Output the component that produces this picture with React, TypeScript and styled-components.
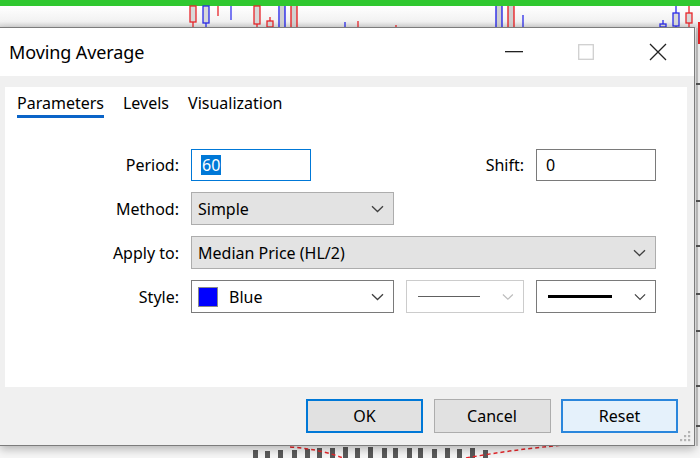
import React from "react";
import styled, { createGlobalStyle, css } from "styled-components";

const GlobalStyle = createGlobalStyle`
  html, body {
    margin: 0;
    padding: 0;
    width: 700px;
    height: 458px;
    overflow: hidden;
    background: #f4f4f4;
  }
  body {
    font-family: "Noto Sans", "Open Sans", Arial, sans-serif;
    color: #000;
  }
`;

const Desktop = styled.div`
  position: relative;
  width: 700px;
  height: 458px;
  overflow: hidden;
`;

const Backdrop = styled.svg`
  position: absolute;
  inset: 0;
`;

const Window = styled.div`
  position: absolute;
  left: 0;
  top: 27px;
  width: 695px;
  display: flex;
  flex-direction: column;
  box-sizing: border-box;
  border: 1px solid #7c7c7c;
  border-left: none;
  background: #f0f0f0;
  box-shadow: 0 3px 9px rgba(0, 0, 0, 0.28);
`;

const TitleBar = styled.div`
  height: 48px;
  display: flex;
  align-items: center;
  background: #fff;
  padding-left: 9px;
`;

const Title = styled.div`
  flex: 1;
  font-size: 18px;
  letter-spacing: -0.1px;
`;

const CaptionButton = styled.div`
  width: 72px;
  height: 48px;
  display: flex;
  align-items: center;
  justify-content: center;
`;

const Body = styled.div`
  display: flex;
  flex-direction: column;
  padding: 11px 7px 12px 5px;
`;

const Panel = styled.div`
  height: 300px;
  background: #fff;
  display: flex;
  flex-direction: column;
`;

const TabStrip = styled.div`
  display: flex;
  gap: 19px;
  padding: 6px 0 0 12px;
`;

const Tab = styled.div<{ $active?: boolean }>`
  font-size: 16px;
  line-height: 20px;
  padding-bottom: 2px;
  border-bottom: 3px solid ${(p) => (p.$active ? "#0a64c8" : "transparent")};
  color: #000;
`;

const Form = styled.div`
  display: grid;
  grid-template-columns: 174px 203px 118px 120px;
  grid-auto-rows: 33px;
  column-gap: 12px;
  row-gap: 11px;
  margin-top: 30px;
  align-items: center;
`;

const Label = styled.div<{ $col?: number }>`
  grid-column: ${(p) => p.$col ?? 1};
  font-size: 16px;
  text-align: right;
  justify-self: end;
`;

const TextBox = styled.div<{ $focused?: boolean; $col?: number }>`
  box-sizing: border-box;
  width: 120px;
  height: 32px;
  display: flex;
  align-items: center;
  padding-left: 9px;
  font-size: 16px;
  background: #fff;
  border: 1px solid ${(p) => (p.$focused ? "#0078d7" : "#7a7a7a")};
  ${(p) => p.$col && css`grid-column: ${p.$col};`}
`;

const Selected = styled.span`
  background: #0078d7;
  color: #fff;
  padding: 0 1px;
  line-height: 20px;
`;

const Select = styled.div<{ $variant?: "gray" | "white" | "disabled"; $span?: string }>`
  box-sizing: border-box;
  height: 33px;
  display: flex;
  align-items: center;
  gap: 11px;
  padding: 0 9px 0 6px;
  font-size: 16px;
  ${(p) => p.$span && css`grid-column: ${p.$span};`}
  ${(p) =>
    p.$variant === "gray"
      ? css`
          background: #e3e3e3;
          border: 1px solid #adadad;
        `
      : p.$variant === "disabled"
      ? css`
          background: #fff;
          border: 1px solid #cccccc;
        `
      : css`
          background: #fff;
          border: 1px solid #7a7a7a;
        `}
`;

const SelectText = styled.span`
  flex: 1;
  white-space: nowrap;
`;

const Swatch = styled.span`
  width: 20px;
  height: 20px;
  box-sizing: border-box;
  background: #0000ff;
  border: 1px solid #8a8a8a;
`;

const LineSample = styled.span<{ $weight: number; $color: string }>`
  width: 69px;
  margin-left: 5px;
  height: ${(p) => p.$weight}px;
  background: ${(p) => p.$color};
`;

const Spacer = styled.span`
  flex: 1;
`;

const ButtonRow = styled.div`
  display: flex;
  justify-content: flex-end;
  gap: 10.5px;
  margin-top: 12px;
  padding-right: 9px;
`;

const Button = styled.div<{ $kind?: "default" | "hover" }>`
  box-sizing: border-box;
  width: 117px;
  height: 34px;
  display: flex;
  align-items: center;
  justify-content: center;
  font-size: 16px;
  ${(p) =>
    p.$kind === "default"
      ? css`
          background: #e1e1e1;
          border: 2px solid #0078d7;
        `
      : p.$kind === "hover"
      ? css`
          background: #e5f1fb;
          border: 2px solid #2a86dc;
        `
      : css`
          background: #e1e1e1;
          border: 1.5px solid #adadad;
        `}
`;

const Grip = styled.svg`
  position: absolute;
  right: 3px;
  bottom: 3px;
`;

function Chevron({ color = "#404040" }: { color?: string }) {
  return (
    <svg width="13" height="8" viewBox="0 0 13 8">
      <path d="M1 1.2 L6.5 6.5 L12 1.2" fill="none" stroke={color} strokeWidth="1.3" />
    </svg>
  );
}

type Candle = { x: number; top: number; bottom: number; color: string; body?: [number, number] };

const candles: Candle[] = [
  { x: 193, top: 6, bottom: 27, color: "#e8262a", body: [6, 22] },
  { x: 206, top: 6, bottom: 27, color: "#2a2ae8", body: [6, 23] },
  { x: 218, top: 6, bottom: 16, color: "#e8262a" },
  { x: 231, top: 6, bottom: 20, color: "#3333ee" },
  { x: 257, top: 6, bottom: 27, color: "#e8262a", body: [6, 24] },
  { x: 270, top: 17, bottom: 27, color: "#e8262a", body: [21, 27] },
  { x: 345, top: 22, bottom: 27, color: "#2a2ae8" },
  { x: 358, top: 21, bottom: 27, color: "#e8262a" },
  { x: 396, top: 25, bottom: 27, color: "#e8262a" },
  { x: 523, top: 15, bottom: 27, color: "#2a2ae8" },
  { x: 663, top: 20, bottom: 27, color: "#2a2ae8", body: [24, 27] },
  { x: 676, top: 6, bottom: 27, color: "#2a2ae8", body: [13, 26] },
  { x: 689, top: 6, bottom: 27, color: "#e8262a", body: [13, 23] },
];

const volumeBars = [
  [253, 450], [265, 451], [278, 450], [292, 450], [305, 449], [317, 448], [330, 448], [343, 447],
  [355, 448], [368, 447], [382, 448], [393, 448], [407, 448], [418, 448], [432, 449], [445, 448],
  [457, 449], [470, 448], [483, 450],
];

function ChartBackdrop() {
  return (
    <Backdrop width="700" height="458" viewBox="0 0 700 458">
      <defs>
        <linearGradient id="strip" x1="0" y1="0" x2="0" y2="1">
          <stop offset="0" stopColor="#ffffff" />
          <stop offset="0.7" stopColor="#f2f2f2" />
          <stop offset="1" stopColor="#d6d6d6" />
        </linearGradient>
      </defs>
      <rect x="0" y="0" width="700" height="458" fill="#f6f6f6" />
      <rect x="0" y="6" width="700" height="22" fill="url(#strip)" />
      <rect x="0" y="0" width="700" height="6" fill="#30c830" />
      {candles.map((c, i) => (
        <g key={i}>
          <line x1={c.x} y1={c.top} x2={c.x} y2={c.bottom} stroke={c.color} strokeWidth="1.3" />
          {c.body && (
            <rect
              x={c.x - 3}
              y={c.body[0]}
              width="6"
              height={c.body[1] - c.body[0]}
              fill="#d8d8d8"
              stroke={c.color}
              strokeWidth="1.3"
            />
          )}
        </g>
      ))}
      <rect x="280" y="6" width="5" height="22" fill="#d0d0d0" />
      <line x1="279" y1="6" x2="279" y2="28" stroke="#2a2ae8" strokeWidth="1.4" />
      <line x1="285" y1="6" x2="285" y2="28" stroke="#2a2ae8" strokeWidth="1.4" />
      <rect x="291" y="6" width="6" height="22" fill="#d0d0d0" />
      <line x1="291" y1="6" x2="291" y2="28" stroke="#e8262a" strokeWidth="1.4" />
      <line x1="297" y1="6" x2="297" y2="28" stroke="#e8262a" strokeWidth="1.4" />
      <rect x="496" y="6" width="6" height="22" fill="#d0d0d0" />
      <line x1="496" y1="6" x2="496" y2="28" stroke="#2a2ae8" strokeWidth="1.4" />
      <line x1="502" y1="6" x2="502" y2="28" stroke="#2a2ae8" strokeWidth="1.4" />
      <rect x="508" y="6" width="6" height="22" fill="#d0d0d0" />
      <line x1="508" y1="6" x2="508" y2="28" stroke="#e8262a" strokeWidth="1.4" />
      <line x1="514" y1="6" x2="514" y2="28" stroke="#e8262a" strokeWidth="1.4" />
      <line x1="699" y1="22" x2="699" y2="44" stroke="#e8262a" strokeWidth="2" />
      <line x1="697" y1="28" x2="697" y2="446" stroke="#9a9a9a" strokeWidth="1" />
      {[83, 200, 245, 293, 330, 385, 425].map((y) => (
        <rect key={y} x="696" y={y} width="4" height="2" fill="#555" />
      ))}
      {volumeBars.map(([x, y]) => (
        <rect key={x} x={x} y={y} width="5" height={458 - y} fill="#5a5a5a" />
      ))}
      <path d="M290 447 Q320 449 343 458" fill="none" stroke="#e8262a" strokeWidth="1.5" strokeDasharray="4 3" />
      <path d="M466 458 Q510 450 563 445" fill="none" stroke="#e8262a" strokeWidth="1.5" strokeDasharray="4 3" />
    </Backdrop>
  );
}

export default function App() {
  return (
    <>
      <GlobalStyle />
      <Desktop>
        <ChartBackdrop />
        <Window>
          <TitleBar>
            <Title>Moving Average</Title>
            <CaptionButton>
              <svg width="18" height="2" viewBox="0 0 18 2">
                <rect width="18" height="1.3" fill="#222" />
              </svg>
            </CaptionButton>
            <CaptionButton>
              <svg width="16" height="16" viewBox="0 0 16 16">
                <rect x="0.7" y="0.7" width="14.6" height="14.6" fill="none" stroke="#cfcfcf" strokeWidth="1.3" />
              </svg>
            </CaptionButton>
            <CaptionButton>
              <svg width="18" height="18" viewBox="0 0 18 18">
                <path d="M1 1 L17 17 M17 1 L1 17" stroke="#222" strokeWidth="1.3" />
              </svg>
            </CaptionButton>
          </TitleBar>
          <Body>
            <Panel>
              <TabStrip>
                <Tab $active>Parameters</Tab>
                <Tab>Levels</Tab>
                <Tab>Visualization</Tab>
              </TabStrip>
              <Form>
                <Label>Period:</Label>
                <TextBox $focused>
                  <Selected>60</Selected>
                </TextBox>
                <Label $col={3}>Shift:</Label>
                <TextBox $col={4}>0</TextBox>

                <Label>Method:</Label>
                <Select $variant="gray">
                  <SelectText>Simple</SelectText>
                  <Chevron />
                </Select>

                <Label>Apply to:</Label>
                <Select $variant="gray" $span="2 / 5">
                  <SelectText>Median Price (HL/2)</SelectText>
                  <Chevron />
                </Select>

                <Label>Style:</Label>
                <Select $variant="white">
                  <Swatch />
                  <SelectText>Blue</SelectText>
                  <Chevron />
                </Select>
                <Select $variant="disabled">
                  <LineSample $weight={1} $color="#606060" />
                  <Spacer />
                  <Chevron color="#bdbdbd" />
                </Select>
                <Select $variant="white">
                  <LineSample $weight={3} $color="#000" />
                  <Spacer />
                  <Chevron />
                </Select>
              </Form>
            </Panel>
            <ButtonRow>
              <Button $kind="default">OK</Button>
              <Button>Cancel</Button>
              <Button $kind="hover">Reset</Button>
            </ButtonRow>
          </Body>
          <Grip width="12" height="12" viewBox="0 0 12 12">
            {[
              [9, 1], [5, 5], [9, 5], [1, 9], [5, 9], [9, 9],
            ].map(([x, y]) => (
              <rect key={`${x}-${y}`} x={x} y={y} width="2.2" height="2.2" fill="#b4b4b4" />
            ))}
          </Grip>
        </Window>
      </Desktop>
    </>
  );
}
